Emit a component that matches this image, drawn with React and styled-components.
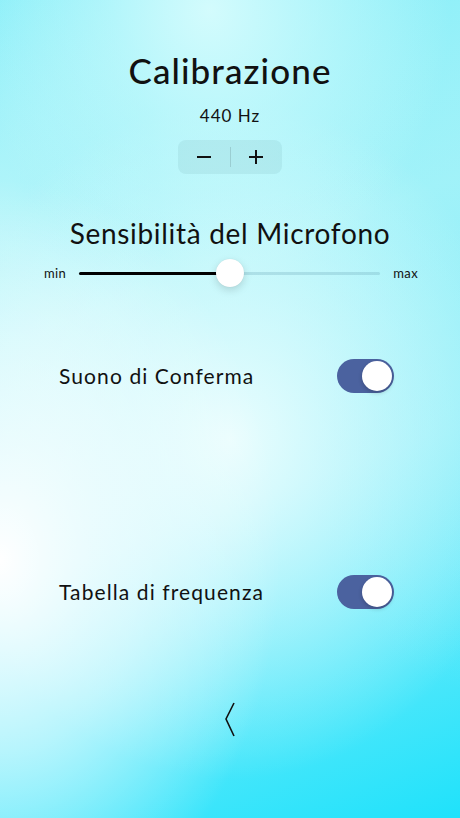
import React from 'react';
import styled, { createGlobalStyle } from 'styled-components';

const GlobalStyle = createGlobalStyle`
  html, body {
    margin: 0;
    padding: 0;
  }
  body {
    font-family: Lato, "Noto Sans", sans-serif;
    color: #111;
  }
`;

const Screen = styled.div`
  width: 460px;
  height: 818px;
  overflow: hidden;
  display: flex;
  flex-direction: column;
  align-items: center;
  background:
    radial-gradient(ellipse 280px 380px at 0px 560px, rgba(255,255,255,1) 0%, rgba(255,255,255,0.55) 50%, rgba(255,255,255,0) 100%),
    radial-gradient(ellipse 240px 280px at 210px 10px, rgba(215,252,253,0.95) 0%, rgba(215,252,253,0) 100%),
    radial-gradient(ellipse 300px 340px at 230px 440px, rgba(238,254,254,0.95) 0%, rgba(238,254,254,0) 100%),
    radial-gradient(ellipse 160px 300px at 0px 230px, rgba(200,248,251,0.6) 0%, rgba(200,248,251,0) 100%),
    radial-gradient(ellipse 180px 360px at 470px 330px, rgba(150,240,248,0.6) 0%, rgba(150,240,248,0) 100%),
    linear-gradient(160deg, #7fedf8 0%, #a6f3f9 35%, #8eeefa 60%, #1fe2fb 100%);
`;

const Title = styled.h1`
  margin: 48px 0 0;
  font-size: 35px;
  font-weight: 500;
  line-height: 44px;
  letter-spacing: 1.1px;
`;

const Freq = styled.div`
  margin-top: 14px;
  font-size: 17px;
  line-height: 20px;
  letter-spacing: 1px;
`;

const Stepper = styled.div`
  margin-top: 14px;
  width: 104px;
  height: 34px;
  border-radius: 8px;
  background: rgba(90, 150, 160, 0.12);
  display: flex;
  align-items: center;
`;

const StepButton = styled.button`
  flex: 1;
  height: 100%;
  border: none;
  background: transparent;
  padding: 0;
  display: flex;
  align-items: center;
  justify-content: center;
  color: #111;
`;

const StepDivider = styled.span`
  width: 1px;
  height: 20px;
  background: rgba(0, 0, 0, 0.12);
`;

const SectionTitle = styled.h2`
  margin: 42px 0 0;
  font-size: 28px;
  font-weight: 400;
  line-height: 34px;
  letter-spacing: 0.7px;
`;

const SliderRow = styled.div`
  margin-top: 15px;
  width: 100%;
  padding: 0 42px 0 44px;
  box-sizing: border-box;
  display: flex;
  align-items: center;
  gap: 13px;
  font-size: 13px;
  letter-spacing: 0.4px;
`;

const Track = styled.div`
  position: relative;
  flex: 1;
  height: 3px;
  border-radius: 2px;
  background: rgba(110, 170, 185, 0.3);
`;

const Fill = styled.div`
  height: 100%;
  border-radius: 2px;
  background: #000;
`;

const Thumb = styled.div`
  position: absolute;
  top: 50%;
  width: 28px;
  height: 28px;
  border-radius: 50%;
  background: #fff;
  transform: translate(-50%, -50%);
  box-shadow: 0 3px 8px rgba(0, 0, 0, 0.15), 0 0 1px rgba(0, 0, 0, 0.1);
`;

const OptionRow = styled.div`
  width: 100%;
  box-sizing: border-box;
  padding: 0 66px 0 59px;
  margin-top: ${p => p.$top}px;
  display: flex;
  align-items: center;
  justify-content: space-between;
`;

const OptionLabel = styled.span`
  font-size: 21px;
  line-height: 26px;
  letter-spacing: 1.1px;
`;

const Toggle = styled.div`
  width: 57px;
  height: 34px;
  border-radius: 17px;
  background: #4b629f;
  padding: 2px;
  box-sizing: border-box;
  display: flex;
  justify-content: ${p => (p.$on ? 'flex-end' : 'flex-start')};
`;

const Knob = styled.div`
  width: 30px;
  height: 30px;
  border-radius: 50%;
  background: #fff;
  box-shadow: 0 2px 4px rgba(0, 0, 0, 0.2);
`;

const BackButton = styled.button`
  margin-top: 93px;
  border: none;
  background: transparent;
  padding: 0;
  display: flex;
`;

const Slider = ({ value }) => (
  <SliderRow>
    <span>min</span>
    <Track>
      <Fill style={{ width: `${value * 100}%` }} />
      <Thumb style={{ left: `${value * 100}%` }} />
    </Track>
    <span>max</span>
  </SliderRow>
);

const App = () => {
  const [hz, setHz] = React.useState(440);
  const [confirm, setConfirm] = React.useState(true);
  const [table, setTable] = React.useState(true);

  return (
    <Screen>
      <GlobalStyle />
      <Title>Calibrazione</Title>
      <Freq>{hz} Hz</Freq>
      <Stepper>
        <StepButton onClick={() => setHz(hz - 1)}>
          <svg width="16" height="16" viewBox="0 0 16 16">
            <path d="M1 8h14" stroke="#111" strokeWidth="2" />
          </svg>
        </StepButton>
        <StepDivider />
        <StepButton onClick={() => setHz(hz + 1)}>
          <svg width="16" height="16" viewBox="0 0 16 16">
            <path d="M1 8h14M8 1v14" stroke="#111" strokeWidth="2" />
          </svg>
        </StepButton>
      </Stepper>

      <SectionTitle>Sensibilità del Microfono</SectionTitle>
      <Slider value={0.5} />

      <OptionRow $top={78}>
        <OptionLabel>Suono di Conferma</OptionLabel>
        <Toggle $on={confirm} onClick={() => setConfirm(!confirm)}>
          <Knob />
        </Toggle>
      </OptionRow>

      <OptionRow $top={182}>
        <OptionLabel>Tabella di frequenza</OptionLabel>
        <Toggle $on={table} onClick={() => setTable(!table)}>
          <Knob />
        </Toggle>
      </OptionRow>

      <BackButton>
        <svg width="12" height="36" viewBox="0 0 12 36">
          <path d="M10 1L2 17l8 17" fill="none" stroke="#111" strokeWidth="1.6" />
        </svg>
      </BackButton>
    </Screen>
  );
};

export default App;
